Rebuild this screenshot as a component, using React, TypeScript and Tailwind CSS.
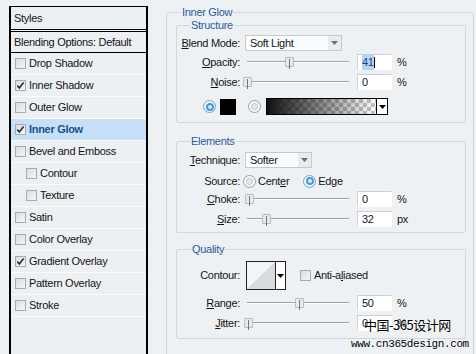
import React from "react";

type StyleItem = { name: string; checked?: boolean; active?: boolean; indent?: boolean };

const styleItems: StyleItem[] = [
  { name: "Drop Shadow" },
  { name: "Inner Shadow", checked: true },
  { name: "Outer Glow" },
  { name: "Inner Glow", checked: true, active: true },
  { name: "Bevel and Emboss" },
  { name: "Contour", indent: true },
  { name: "Texture", indent: true },
  { name: "Satin" },
  { name: "Color Overlay" },
  { name: "Gradient Overlay", checked: true },
  { name: "Pattern Overlay" },
  { name: "Stroke" },
];

const Checkbox = ({ checked }: { checked?: boolean }) => (
  <span className="flex h-[11px] w-[11px] shrink-0 items-center justify-center border border-[#a3abb4] bg-gradient-to-br from-[#d9dde2] to-[#f4f6f8]">
    {checked && (
      <svg width="9" height="9" viewBox="0 0 9 9">
        <path d="M1.3 4.6 L3.4 7 L7.6 1.6" stroke="#2b2b2b" strokeWidth="1.6" fill="none" />
      </svg>
    )}
  </span>
);

const Arrow = ({ color = "#555" }: { color?: string }) => (
  <svg width="7" height="4" viewBox="0 0 7 4">
    <path d="M0 0 H7 L3.5 4 Z" fill={color} />
  </svg>
);

const Radio = ({ on }: { on?: boolean }) =>
  on ? (
    <span className="flex h-[13px] w-[13px] shrink-0 items-center justify-center rounded-full border border-[#7aa3c8] bg-[#eef5fb]">
      <span className="h-[8px] w-[8px] rounded-full border-2 border-[#4b9ad6] bg-[#d6ecfb]" />
    </span>
  ) : (
    <span className="flex h-[13px] w-[13px] shrink-0 items-center justify-center rounded-full border border-[#98a1aa] bg-[#f6f7f8]">
      <span className="h-[7px] w-[7px] rounded-full border border-[#c2c8ce] bg-[#e4e7ea]" />
    </span>
  );

const Select = ({ value, w }: { value: string; w: string }) => (
  <div className={`ml-[5px] flex h-4 items-center border border-[#c3cad2] bg-[#fbfcfd] ${w}`}>
    <span className="flex-1 pl-[4px]">{value}</span>
    <span className="flex h-full w-[13px] items-center justify-center bg-[#e8ecf0]">
      <Arrow color="#6a6f75" />
    </span>
  </div>
);

const Slider = ({ pos }: { pos: number }) => (
  <div className="relative ml-[3px] h-4 w-[106px]">
    <div className="absolute left-[4px] right-0 top-[7px] h-[2px] border-t border-b border-t-[#99a1a9] border-b-white" />
    <div
      className="absolute top-[3px] flex h-[10px] w-[9px] justify-center rounded-[1px] border border-[#b4bcc4] bg-[#e6eaee]"
      style={{ left: pos }}
    >
      <span className="mt-[1px] h-[10px] w-px bg-[#6d757d]" />
    </div>
  </div>
);

const Field = ({ children }: { children: React.ReactNode }) => (
  <div className="ml-[8px] flex h-4 w-[35px] items-center border border-[#c9d0d7] border-b-white border-r-white bg-white pl-[4px]">
    {children}
  </div>
);

const Label = ({ children }: { children: React.ReactNode }) => (
  <span className="w-[63px] shrink-0 text-right">{children}</span>
);

const SliderRow = ({
  label,
  pos,
  value,
  unit,
  className,
}: {
  label: React.ReactNode;
  pos: number;
  value: React.ReactNode;
  unit: string;
  className: string;
}) => (
  <div className={`flex h-4 items-center ${className}`}>
    <Label>{label}</Label>
    <Slider pos={pos} />
    <Field>{value}</Field>
    <span className="ml-[5px]">{unit}</span>
  </div>
);

const Legend = ({ children, ml }: { children: React.ReactNode; ml: string }) => (
  <legend className={`px-[1px] leading-[13px] text-[#2c5a9c] ${ml}`}>{children}</legend>
);

export default function App() {
  return (
    <div className="relative flex h-[354px] w-[476px] overflow-hidden bg-[#eef1f4] font-['Liberation_Sans',Arial,sans-serif] text-[11px] tracking-[-0.3px] text-[#141414]">
      {/* styles list */}
      <div className="ml-[9px] mt-[6px] h-[360px] w-[139px] shrink-0 border-x-2 border-t border-black bg-[#edf0f3]">
        <div className="flex h-[25px] items-center border-b-[3px] border-double border-black pl-[3px]">Styles</div>
        <div className="flex h-[21px] items-center border-b border-black pl-[3px]">Blending Options: Default</div>
        {styleItems.map((s) => (
          <div
            key={s.name}
            className={`flex h-[22px] items-center gap-[3px] border-b border-[#fafbfc] ${
              s.indent ? "pl-[15px]" : "pl-[4px]"
            } ${s.active ? "bg-[#c6e1f7] font-bold text-[#1b4f8f]" : ""}`}
          >
            <Checkbox checked={s.checked} />
            <span>{s.name}</span>
          </div>
        ))}
      </div>

      {/* settings */}
      <fieldset className="ml-[18px] mr-[2px] mt-[6px] h-[370px] flex-1 rounded-[3px] border border-[#d0d7de]">
        <Legend ml="ml-[14px]">Inner Glow</Legend>

        <fieldset className="ml-[9px] mr-[7px] rounded-[2px] border border-[#d0d7de] pb-[7px] pt-[3px]">
          <Legend ml="ml-[13px]">Structure</Legend>
          <div className="flex h-4 items-center">
            <Label>
              <u>B</u>lend Mode:
            </Label>
            <Select value="Soft Light" w="w-[97px]" />
          </div>
          <SliderRow
            className="mt-[3px]"
            label={
              <>
                <u>O</u>pacity:
              </>
            }
            pos={42}
            value={
              <>
                <span className="bg-[#b5d3f2] text-[#1a3f7a]">41</span>
                <span className="h-[11px] w-px bg-black" />
              </>
            }
            unit="%"
          />
          <SliderRow
            className="mt-[4px]"
            label={
              <>
                <u>N</u>oise:
              </>
            }
            pos={0}
            value="0"
            unit="%"
          />
          <div className="mt-[8px] flex h-[17px] items-center pl-[26px]">
            <Radio on />
            <span className="ml-[4px] h-4 w-4 bg-black" />
            <span className="ml-[12px]">
              <Radio />
            </span>
            <div className="ml-[5px] flex h-[17px] w-[122px] border border-black">
              <div className="flex-1 bg-[repeating-conic-gradient(#c3c3c3_0%_25%,#ffffff_0%_50%)] bg-[length:8px_8px]">
                <div className="h-full w-full bg-gradient-to-r from-[#111] to-transparent" />
              </div>
              <div className="flex w-[11px] items-center justify-center border-l border-black bg-white">
                <Arrow color="#000" />
              </div>
            </div>
          </div>
        </fieldset>

        <fieldset className="ml-[9px] mr-[7px] mt-[12px] rounded-[2px] border border-[#d0d7de] pb-[5px] pt-[4px]">
          <Legend ml="ml-[13px]">Elements</Legend>
          <div className="flex h-4 items-center">
            <Label>
              <u>T</u>echnique:
            </Label>
            <Select value="Softer" w="w-[67px]" />
          </div>
          <div className="mt-[5px] flex h-4 items-center">
            <Label>Source:</Label>
            <span className="ml-[3px]">
              <Radio />
            </span>
            <span className="ml-[2px]">
              Cent<u>e</u>r
            </span>
            <span className="ml-[14px]">
              <Radio on />
            </span>
            <span className="ml-[2px]">Edge</span>
          </div>
          <SliderRow
            className="mt-[2px]"
            label={
              <>
                <u>C</u>hoke:
              </>
            }
            pos={2}
            value="0"
            unit="%"
          />
          <SliderRow
            className="mt-[4px]"
            label={
              <>
                <u>S</u>ize:
              </>
            }
            pos={19}
            value="32"
            unit="px"
          />
        </fieldset>

        <fieldset className="ml-[9px] mr-[7px] mt-[10px] rounded-[2px] border border-[#d0d7de] pb-[7px] pt-[5px]">
          <Legend ml="ml-[14px]">Quality</Legend>
          <div className="flex h-[29px] items-center">
            <Label>Contour:</Label>
            <div className="ml-[6px] flex h-[29px] w-[40px] border border-[#222]">
              <svg width="28" height="27" viewBox="0 0 28 27">
                <rect width="28" height="27" fill="#f3f4f6" />
                <polygon points="0,27 28,0 28,27" fill="#d8dbdf" />
              </svg>
              <div className="flex flex-1 items-center justify-center border-l border-[#222] bg-white">
                <Arrow color="#000" />
              </div>
            </div>
            <span className="ml-[14px]">
              <Checkbox />
            </span>
            <span className="ml-[3px]">
              Anti-a<u>l</u>iased
            </span>
          </div>
          <SliderRow
            className="mt-[5px]"
            label={
              <>
                <u>R</u>ange:
              </>
            }
            pos={52}
            value="50"
            unit="%"
          />
          <SliderRow
            className="mt-[4px]"
            label={
              <>
                <u>J</u>itter:
              </>
            }
            pos={1}
            value="0"
            unit="%"
          />
        </fieldset>
      </fieldset>

      {/* watermark */}
      <div className="absolute left-[364px] top-[317px] font-['Noto_Sans_CJK_SC',sans-serif] text-[13px] leading-[16px] tracking-[-0.5px] text-black [text-shadow:0_0_2px_#fff]">
        中国-365设计网
      </div>
      <div className="absolute left-[351px] top-[338px] font-['Liberation_Mono',monospace] text-[11px] leading-[12px] tracking-[-0.4px] text-black [text-shadow:0_0_2px_#fff]">
        www.cn365design.com
      </div>
    </div>
  );
}
